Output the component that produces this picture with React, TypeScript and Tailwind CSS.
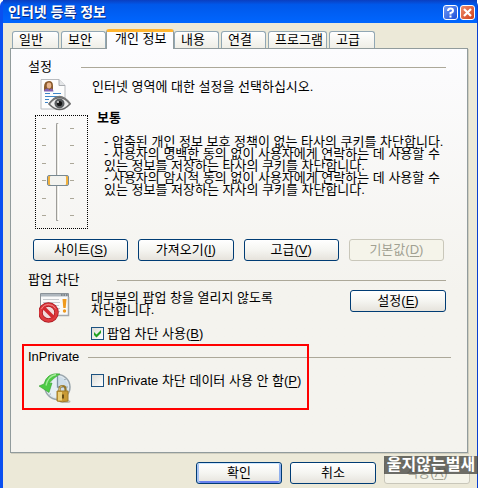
import { useState } from "react";
import type { ReactNode } from "react";
import clsx from "clsx";

const tabs = [
  { label: "일반", width: "w-[47px]" },
  { label: "보안", width: "w-[45px]" },
  { label: "개인 정보", width: "w-[68px]" },
  { label: "내용", width: "w-[45px]" },
  { label: "연결", width: "w-[45px]" },
  { label: "프로그램", width: "w-[59px]" },
  { label: "고급", width: "w-[46px]" },
];

const policyLines = [
  "- 압축된 개인 정보 보호 정책이 없는 타사의 쿠키를 차단합니다.",
  "- 사용자의 명백한 동의 없이 사용자에게 연락하는 데 사용할 수",
  "있는 정보를 저장하는 타사의 쿠키를 차단합니다.",
  "- 사용자의 암시적 동의 없이 사용자에게 연락하는 데 사용할 수",
  "있는 정보를 저장하는 자사의 쿠키를 차단합니다.",
];

const ticks = [0, 1, 2, 3, 4, 5];

type ButtonProps = {
  label: string;
  accessKey?: string;
  className?: string;
  disabled?: boolean;
  primary?: boolean;
};

function Button({ label, accessKey, className, disabled, primary }: ButtonProps) {
  return (
    <button
      type="button"
      disabled={disabled}
      className={clsx(
        "flex h-[22px] items-center justify-center rounded-[3px] border whitespace-nowrap",
        disabled
          ? "border-[#c9c7ba] bg-[#f5f4ea] text-[#a1a192]"
          : "border-[#003c74] bg-linear-to-b from-white via-[#f5f5f1] to-[#e6e3dc]",
        primary && "shadow-[inset_0_1px_0_#cee7ff,inset_2px_0_0_#a9c4f2,inset_-2px_0_0_#8fb0ee,inset_0_-2px_0_#6982ee]",
        className,
      )}
    >
      <span>
        {label}
        {accessKey && (
          <>
            (<u className="underline-offset-2">{accessKey}</u>)
          </>
        )}
      </span>
    </button>
  );
}

function GroupTitle({ children, width }: { children: ReactNode; width: string }) {
  return (
    <div className="flex h-4 items-center pl-[17px]">
      <h2 className={clsx("shrink-0 whitespace-nowrap", width)}>{children}</h2>
      <div className="h-px flex-1 bg-[#aca899]" />
    </div>
  );
}

type CheckProps = {
  id: string;
  label: string;
  accessKey: string;
  defaultChecked?: boolean;
};

function Check({ id, label, accessKey, defaultChecked }: CheckProps) {
  return (
    <div className="flex items-center gap-[3px]">
      <span className="relative flex">
        <input
          id={id}
          type="checkbox"
          defaultChecked={defaultChecked}
          className="peer size-[13px] appearance-none border border-[#1c5180] bg-linear-to-br from-[#dcdcd7] to-white"
        />
        <svg viewBox="0 0 13 13" className="pointer-events-none absolute inset-0 hidden size-[13px] peer-checked:block">
          <path d="M3 5v3l2.500 2.500L10 6V3L5.500 7.500z" fill="#21a121" />
        </svg>
      </span>
      <label htmlFor={id} className="whitespace-nowrap">
        {label}(<u className="underline-offset-2">{accessKey}</u>)
      </label>
    </div>
  );
}

function PrivacyIcon() {
  return (
    <svg viewBox="0 0 32 34" className="h-[34px] w-8 shrink-0">
      <path d="M1 1.500h18l6 6V31H1z" fill="#fdfdfd" stroke="#b9bcc0" />
      <path d="M19 1.500v6h6" fill="#e4e6e8" stroke="#a9acb0" />
      <path d="M4 13V9q0-6 5-6 4 0 4 5v5z" fill="#8a5a2c" />
      <ellipse cx="9" cy="7.500" rx="2.300" ry="3" fill="#e8b58c" />
      <path d="M4 13.500q0-3 4-3l1.500 1.500 1.500-1.500q2 0 2.500 3z" fill="#8264b4" />
      <path d="M13 15.500h8M5 15.500h5M5 18.500h15M5 21.500h4M5 24.500h3" stroke="#3f86c8" />
      <path d="M9 26q5-6.500 10.500-6.500T30 26q-5 5.500-10.500 5.500T9 26z" fill="#ededed" stroke="#666" strokeWidth="1.500" />
      <path d="M9 26q5-7.500 10.500-7.500T30.500 26" fill="none" stroke="#777" strokeWidth="1.300" />
      <circle cx="19.500" cy="25.500" r="5" fill="#5a5d60" />
      <circle cx="19.500" cy="25.500" r="2.600" fill="#161616" />
      <circle cx="18" cy="24" r="1" fill="#ddd" />
    </svg>
  );
}

function PopupIcon() {
  return (
    <svg viewBox="0 0 32 32" className="mt-0.5 size-8 shrink-0">
      <path d="M1.500 1.500h28v22h-28z" fill="#fafafa" stroke="#8b9298" />
      <path d="M2 2h27v2.500H2z" fill="#aeb6bd" />
      <path d="M22 3h1.500M24.500 3H26M27 3h1.500" stroke="#4f565c" />
      <path d="M4 7.500h16M4 10.500h17M8 13.500h12M16 16.500h5M18 19.500h3" stroke="#c6c9cc" />
      <path d="M29.500 5v18.500H17" fill="none" stroke="#a4a8ac" strokeWidth="1.500" />
      <path d="M23.500 7h4l-.8 9h-2.400z" fill="#ef9a1f" />
      <circle cx="25.500" cy="19" r="1.700" fill="#ef9a1f" />
      <circle cx="9.500" cy="20.500" r="8" fill="#f1dcdc" stroke="#a91820" strokeWidth="4.500" />
      <circle cx="9.500" cy="20.500" r="8" fill="none" stroke="#de3a3e" strokeWidth="3" />
      <path d="m4.500 15.500 10 10" stroke="#d42a30" strokeWidth="3.500" />
      <path d="M2.500 17q2-4.500 7-4.500t7 4" fill="none" stroke="#f08a8a" />
    </svg>
  );
}

function InPrivateIcon() {
  return (
    <svg viewBox="0 0 32 32" className="size-8 shrink-0">
      <circle cx="18.500" cy="15" r="12.500" fill="#dfe8ee" stroke="#9aa6ad" strokeWidth="1.500" />
      <circle cx="18.500" cy="15" r="10.500" fill="#cfdee9" />
      <path d="M18.500 4.500v21a10.500 10.500 0 0 1 0-21z" fill="#e6eff5" />
      <path d="M18.500 4v11h6" fill="none" stroke="#7f96a6" strokeWidth="1.300" />
      <path d="M18.500 24v1M9 15h1M27.500 15h1M25.500 8l.8-.8M11.500 22l-.8.8" stroke="#5f7484" />
      <path d="M21 2Q8 0 5 12L0 14l10 6.500 3-9.500-3 .5Q14 6 21 2z" fill="#4ecb45" stroke="#35a030" strokeWidth=".6" />
      <path d="M17 2.500Q9 4 7 13.500" fill="none" stroke="#a5eb9c" strokeWidth="1.300" />
      <ellipse cx="26" cy="29.500" rx="5.500" ry="1.500" fill="#bdbab0" />
      <path d="M20.500 20v-3q0-3 3-3t3 3v3" fill="none" stroke="#94752a" strokeWidth="2.200" />
      <path d="M20.500 20v-3q0-3 3-3" fill="none" stroke="#e2cb88" strokeWidth=".8" />
      <path d="M18 19h11v10q-5.500 1.500-11 0z" fill="#c99a35" stroke="#a27c2a" />
      <path d="M19 20h4v8.500h-4z" fill="#ecd07c" />
      <path d="M24 22.500v4" stroke="#5d4513" strokeWidth="1.800" />
    </svg>
  );
}

function TickColumn() {
  return (
    <div className="flex h-[88px] w-1 flex-col justify-between">
      {ticks.map((tick) => (
        <span key={tick} className="h-px bg-[#aca899]" />
      ))}
    </div>
  );
}

function LevelSlider() {
  return (
    <div className="mt-[3px] flex h-[114px] w-[53px] shrink-0 items-center justify-center gap-px border border-dotted border-black pr-2">
      <TickColumn />
      <input
        type="range"
        min={0}
        max={5}
        defaultValue={2}
        aria-label="설정"
        className="h-[98px] w-[22px] appearance-none bg-transparent [direction:rtl] [writing-mode:vertical-lr] [&::-webkit-slider-runnable-track]:w-[3px] [&::-webkit-slider-runnable-track]:rounded-sm [&::-webkit-slider-runnable-track]:border [&::-webkit-slider-runnable-track]:border-[#9d9c99] [&::-webkit-slider-runnable-track]:border-r-white [&::-webkit-slider-runnable-track]:bg-[#ecebe4] [&::-webkit-slider-thumb]:-ml-[10px] [&::-webkit-slider-thumb]:h-[11px] [&::-webkit-slider-thumb]:w-[22px] [&::-webkit-slider-thumb]:appearance-none [&::-webkit-slider-thumb]:rounded-[2px] [&::-webkit-slider-thumb]:border [&::-webkit-slider-thumb]:border-[#778892] [&::-webkit-slider-thumb]:bg-[#f3f3ef] [&::-webkit-slider-thumb]:shadow-[inset_2px_0_0_#f2b13c,inset_-2px_0_0_#f2b13c]"
      />
      <TickColumn />
    </div>
  );
}

function TitleBar() {
  return (
    <header className="flex h-[23px] items-center justify-between bg-linear-to-b from-[#0a3fc0] via-[#0058ea] via-20% to-[#0066ff] pr-0.5 pl-[5px]">
      <h1 className="text-sm leading-4 font-bold text-white [text-shadow:1px_1px_#0a2a80]">인터넷 등록 정보</h1>
      <div className="flex gap-0.5 pt-0.5">
        <button
          type="button"
          aria-label="도움말"
          className="flex size-[15px] items-center justify-center rounded-[3px] border border-white bg-linear-to-br from-[#6f97f5] to-[#1c4fd8]"
        >
          <svg viewBox="0 0 9 11" className="h-[11px] w-[9px]" fill="none" stroke="#fff" strokeWidth="2">
            <path d="M2 4q0-2.500 2.500-2.500T7 3.500 4.500 6v1.500M4.500 8.500v2" />
          </svg>
        </button>
        <button
          type="button"
          aria-label="닫기"
          className="flex size-[15px] items-center justify-center rounded-[3px] border border-white bg-linear-to-br from-[#ee8a6a] to-[#cf3d10]"
        >
          <svg viewBox="0 0 9 9" className="size-[9px]" stroke="#fff" strokeWidth="2.200">
            <path d="m1 1 7 7M8 1 1 8" />
          </svg>
        </button>
      </div>
    </header>
  );
}

export default function App() {
  const [active, setActive] = useState("개인 정보");

  return (
    <div className="relative flex min-h-screen flex-col rounded-t-md border-r border-l-3 border-r-[#0a3fd0] border-l-[#0a4ff0] bg-[#ece9d8] font-['Liberation_Sans','Noto_Sans_CJK_KR',sans-serif] text-[13px] leading-3 text-black">
      <TitleBar />
      <div role="tablist" className="mt-1.5 flex h-[19px] items-end gap-0.5 pl-[9px]">
        {tabs.map((tab) => (
          <button
            key={tab.label}
            type="button"
            role="tab"
            aria-selected={tab.label === active}
            onClick={() => setActive(tab.label)}
            className={clsx(
              "shrink-0 rounded-t-[3px] border border-b-0 text-left whitespace-nowrap",
              tab.width,
              tab.label === active
                ? "relative z-10 -mx-0.5 -mb-px h-5 border-t-3 border-[#919b9c] border-t-[#ffb530] bg-[#fcfcfe] pb-1 pl-2"
                : "h-[17px] border-[#91a7b4] bg-linear-to-b from-white to-[#efeee6] pl-1.5",
            )}
          >
            {tab.label}
          </button>
        ))}
      </div>

      <main
        role="tabpanel"
        className="mr-[9px] ml-[7px] flex min-h-[405px] flex-col border border-[#919b9c] bg-linear-to-b from-[#fcfcfe] to-[#f4f3ee] to-60% pt-2.5 shadow-[1px_1px_0_#d0cebf]"
      >
        <section className="pr-[21px]">
          <GroupTitle width="w-[53px]">설정</GroupTitle>
          <div className="mt-[3px] flex gap-5 pl-[29px]">
            <PrivacyIcon />
            <p className="pt-[3px]">인터넷 영역에 대한 설정을 선택하십시오.</p>
          </div>
          <div className="flex gap-[9px] pl-6">
            <LevelSlider />
            <div>
              <h3 className="font-bold">보통</h3>
              <div className="mt-3 pl-[7px] whitespace-nowrap">
                {policyLines.map((line) => (
                  <p key={line}>{line}</p>
                ))}
              </div>
            </div>
          </div>
          <div className="mt-2.5 grid grid-cols-4 gap-2.5 pr-0.5 pl-[22px]">
            <Button label="사이트" accessKey="S" />
            <Button label="가져오기" accessKey="I" />
            <Button label="고급" accessKey="V" />
            <Button label="기본값" accessKey="D" disabled />
          </div>
        </section>

        <section className="mt-[11px] pr-[21px]">
          <GroupTitle width="w-[89px]">팝업 차단</GroupTitle>
          <div className="mt-0.5 flex items-start pl-7">
            <PopupIcon />
            <div className="ml-5 flex-1 pt-0.5">
              <p>
                대부분의 팝업 창을 열리지 않도록
                <br />
                차단합니다.
              </p>
              <div className="mt-[11px]">
                <Check id="popup" label="팝업 차단 사용" accessKey="B" defaultChecked />
              </div>
            </div>
            <Button label="설정" accessKey="E" className="w-24" />
          </div>
        </section>

        <section className="relative mt-[9px] pr-4">
          <GroupTitle width="w-[60px]">InPrivate</GroupTitle>
          <div className="mt-[7px] flex items-start gap-5 pl-7">
            <InPrivateIcon />
            <div className="pt-0.5">
              <Check id="inprivate" label="InPrivate 차단 데이터 사용 안 함" accessKey="P" />
            </div>
          </div>
          <div className="pointer-events-none absolute -top-[5px] left-[11px] h-[66px] w-[287px] border-2 border-[#ff0000]" />
        </section>
      </main>

      <footer className="mt-[9px] mr-[7px] flex justify-end gap-2 pb-1">
        <Button label="확인" className="w-[86px]" primary />
        <Button label="취소" className="w-[86px]" />
        <Button label="적용" accessKey="A" className="w-[86px]" disabled />
      </footer>

      <div className="absolute -right-px bottom-3.5 flex h-[18px] w-[94px] items-center justify-center bg-[#4b4b46]/80 text-base leading-4 font-bold whitespace-nowrap text-white">
        울지않는벌새
      </div>
    </div>
  );
}
